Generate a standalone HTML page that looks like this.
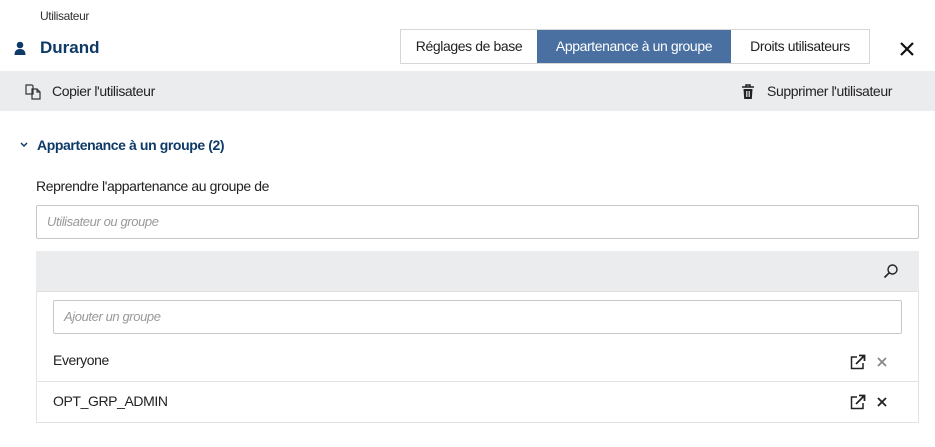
<!DOCTYPE html>
<html><head><style>
*{box-sizing:border-box;margin:0;padding:0}
body{width:935px;height:447px;background:#fff;font-family:"Liberation Sans",sans-serif;color:#222;position:relative;overflow:hidden;font-size:14px;letter-spacing:-0.4px}
.a{position:absolute}
</style></head><body>
<div class="a" style="left:40px;top:9px;font-size:12px;color:#333">Utilisateur</div>
<svg class="a" style="left:14px;top:41px" width="12" height="14" viewBox="0 0 12 14"><circle cx="6" cy="4" r="3.3" fill="#0d3a66"/><path d="M0.5 14 Q0.5 8 6 8 Q11.5 8 11.5 14Z" fill="#0d3a66"/></svg>
<div class="a" style="left:40px;top:38px;font-size:17px;font-weight:bold;color:#0d3a66;letter-spacing:0">Durand</div>
<div class="a" style="left:400px;top:29px;width:470px;height:35px;border:1px solid #d6d6d6;display:flex;font-size:14px">
<div style="width:136px;line-height:33px;text-align:center">Réglages de base</div>
<div style="width:194px;line-height:33px;text-align:center;background:#4a70a2;color:#fff">Appartenance à un groupe</div>
<div style="flex:1;line-height:33px;text-align:center">Droits utilisateurs</div></div>
<svg class="a" style="left:900px;top:42px" width="14" height="14" viewBox="0 0 14 14"><path d="M1 1L13 13M13 1L1 13" stroke="#111" stroke-width="2.2"/></svg>
<div class="a" style="left:0;top:71px;width:935px;height:40px;background:#ebecee"></div>
<svg class="a" style="left:25px;top:84px" width="17" height="16" viewBox="0 0 17 16"><path d="M1 1H7L8 2V10H1Z M7 5H12L15 8V15H7Z M12 5V8H15" fill="none" stroke="#333" stroke-width="1.2"/></svg>
<div class="a" style="left:52px;top:83px">Copier l'utilisateur</div>
<svg class="a" style="left:741px;top:84px" width="14" height="16" viewBox="0 0 14 16"><path d="M1 3H13M5 3V1H9V3" stroke="#222" stroke-width="1.5" fill="none"/><path d="M2.5 5H11.5L10.8 15H3.2Z" fill="#222"/><path d="M5.5 7V13M7 7V13M8.5 7V13" stroke="#ebecee" stroke-width="0.8"/></svg>
<div class="a" style="left:767px;top:83px">Supprimer l'utilisateur</div>
<svg class="a" style="left:19px;top:141px" width="10" height="8" viewBox="0 0 10 8"><path d="M2 2L5 5L8 2" stroke="#0d3a66" stroke-width="1.5" fill="none"/></svg>
<div class="a" style="left:37px;top:137px;font-weight:bold;color:#0d3a66">Appartenance à un groupe (2)</div>
<div class="a" style="left:36px;top:178px">Reprendre l'appartenance au groupe de</div>
<div class="a" style="left:36px;top:205px;width:883px;height:34px;border:1px solid #c8c8c8;border-radius:2px;padding-left:10px;line-height:32px;font-style:italic;font-size:13px;color:#999">Utilisateur ou groupe</div>
<div class="a" style="left:36px;top:251px;width:883px;height:172px;border:1px solid #e3e3e3;border-top:none"></div>
<div class="a" style="left:36px;top:251px;width:883px;height:41px;background:#ebecee;border-bottom:1px solid #e0e0e0"></div>
<svg class="a" style="left:883px;top:263px" width="16" height="16" viewBox="0 0 16 16"><circle cx="9.5" cy="6.5" r="4.5" stroke="#222" stroke-width="1.4" fill="none"/><path d="M6.3 9.7L1.5 14.5" stroke="#222" stroke-width="1.6"/></svg>
<div class="a" style="left:53px;top:300px;width:849px;height:34px;border:1px solid #c8c8c8;border-radius:2px;padding-left:10px;line-height:32px;font-style:italic;font-size:13px;color:#999">Ajouter un groupe</div>
<div class="a" style="left:53px;top:352px">Everyone</div>
<div class="a" style="left:37px;top:381px;width:881px;height:1px;background:#e3e3e3"></div>
<div class="a" style="left:53px;top:393px">OPT_GRP_ADMIN</div>
<svg class="a" style="left:850px;top:354px" width="16" height="16" viewBox="0 0 16 16"><path d="M7 3H1.5V14.5H13V9" stroke="#222" stroke-width="1.5" fill="none"/><path d="M6 10L14 2M9 1.5H14.5V7" stroke="#222" stroke-width="1.8" fill="none"/></svg>
<svg class="a" style="left:877px;top:357px" width="10" height="10" viewBox="0 0 10 10"><path d="M1 1L9 9M9 1L1 9" stroke="#888" stroke-width="1.8"/></svg>
<svg class="a" style="left:850px;top:394px" width="16" height="16" viewBox="0 0 16 16"><path d="M7 3H1.5V14.5H13V9" stroke="#222" stroke-width="1.5" fill="none"/><path d="M6 10L14 2M9 1.5H14.5V7" stroke="#222" stroke-width="1.8" fill="none"/></svg>
<svg class="a" style="left:877px;top:397px" width="10" height="10" viewBox="0 0 10 10"><path d="M1 1L9 9M9 1L1 9" stroke="#222" stroke-width="1.8"/></svg>
</body></html>
